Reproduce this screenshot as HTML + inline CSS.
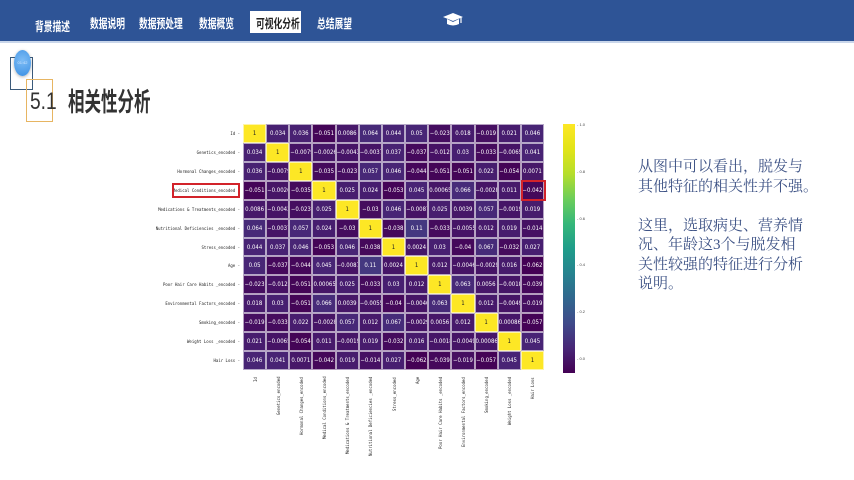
<!DOCTYPE html>
<html><head><meta charset="utf-8">
<style>
*{margin:0;padding:0;box-sizing:border-box}
body{width:854px;height:480px;overflow:hidden;background:#fff;position:relative;font-family:"Liberation Sans","Noto Sans CJK SC",sans-serif}
.hdr{position:absolute;left:0;top:0;width:854px;height:43px;background:#2e5496;border-bottom:2px solid #c9d6ea}
.nav{position:absolute;top:13px;color:#fff;font-size:12.5px;white-space:nowrap;transform:scaleX(0.7);transform-origin:0 0;font-weight:bold}
.act{position:absolute;left:250px;top:11px;width:51px;height:22px;background:#fff}
.t{position:absolute;white-space:nowrap}
#hm{position:absolute;left:243px;top:124px;width:301px;height:246px;background:#fff}
.c{position:absolute;color:#fff;font-size:6px;text-align:center;font-family:"DejaVu Sans Condensed","DejaVu Sans",sans-serif;border:0.5px solid rgba(255,255,255,.6);white-space:nowrap;overflow:hidden}
.rl{position:absolute;right:614px;font-size:4px;color:#222;white-space:nowrap;text-align:right;font-family:"DejaVu Sans Mono",monospace}
.cl{position:absolute;font-size:4px;color:#222;white-space:nowrap;transform-origin:0 0;transform:rotate(-90deg);font-family:"DejaVu Sans Mono",monospace}
.rt{font-family:"Liberation Serif","Noto Serif CJK SC",serif;font-size:15px;line-height:19.5px;color:#3d5285}
</style></head><body>
<div class="hdr"></div>
<div class="nav" style="left:35px;top:16px">背景描述</div>
<div class="nav" style="left:90px">数据说明</div>
<div class="nav" style="left:139px">数据预处理</div>
<div class="nav" style="left:199px">数据概览</div>
<div class="act"></div>
<div class="nav" style="left:256px;color:#222">可视化分析</div>
<div class="nav" style="left:317px">总结展望</div>
<svg style="position:absolute;left:443px;top:12px" width="20" height="16" viewBox="0 0 20 16"><polygon points="10,1 20,5 10,9 0,5" fill="#fff"/><path d="M4 7 V12 Q10 15 16 12 V7 L10 10 Z" fill="#fff"/><line x1="18" y1="5" x2="18" y2="11" stroke="#fff" stroke-width="1.2"/></svg>

<div style="position:absolute;left:10px;top:57px;width:23px;height:33px;border:1.5px solid #3b5a7a"></div>
<div style="position:absolute;left:14px;top:50px;width:17px;height:26px;border-radius:50%;background:radial-gradient(circle at 50% 40%,#7dbcf5,#3a8fe3);box-shadow:0 1px 3px rgba(0,0,0,.3);color:#cfe6ff;font-size:4px;text-align:center;line-height:26px">01:42</div>
<div style="position:absolute;left:26px;top:79px;width:27px;height:43px;border:1.5px solid #e7b562"></div>
<div class="t" style="left:30px;top:88px;font-size:24px;color:#333;transform:scaleX(0.8);transform-origin:0 0">5.1</div>
<div class="t" style="left:68px;top:81px;font-size:22px;color:#333;font-weight:bold;transform:scale(0.75,1.2);transform-origin:0 0">相关性分析</div>

<div id="hm"></div>
<div id="lbl"></div>
<div style="position:absolute;left:172px;top:183px;width:68px;height:15px;border:2px solid #d2232a"></div>
<div style="position:absolute;left:521px;top:180px;width:25px;height:21px;border:2.5px solid #d2232a"></div>

<div style="position:absolute;left:563px;top:124px;width:12px;height:249px;background:linear-gradient(to top,#440154 0%,#482777 10%,#3f4a8a 20%,#31678e 30%,#26838f 40%,#1f9d8a 50%,#35b779 60%,#6cce5a 70%,#b6de2b 80%,#e2e418 90%,#fde725 100%)"></div>
<div id="cb"></div>

<div class="t rt" style="left:638px;top:158px">从图中可以看出，脱发与<br>其他特征的相关性并不强。<br><br>这里，选取病史、营养情<br>况、年龄这3个与脱发相<br>关性较强的特征进行分析<br>说明。</div>

<script>
var L=["Id","Genetics_encoded","Hormonal Changes_encoded","Medical Conditions_encoded","Medications & Treatments_encoded","Nutritional Deficiencies _encoded","Stress_encoded","Age","Poor Hair Care Habits _encoded","Environmental Factors_encoded","Smoking_encoded","Weight Loss _encoded","Hair Loss"];
var M=[
["1","0.034","0.036","-0.051","0.0086","0.064","0.044","0.05","-0.023","0.018","-0.019","0.021","0.046"],
["0.034","1","-0.0079","-0.0026","-0.0043","-0.0037","0.037","-0.037","-0.012","0.03","-0.033","-0.0065","0.041"],
["0.036","-0.0079","1","-0.035","-0.023","0.057","0.046","-0.044","-0.051","-0.051","0.022","-0.054","0.0071"],
["-0.051","-0.0026","-0.035","1","0.025","0.024","-0.053","0.045","0.00065","0.066","-0.0028","0.011","-0.042"],
["0.0086","-0.0043","-0.023","0.025","1","-0.03","0.046","-0.0087","0.025","0.0039","0.057","-0.0019","0.019"],
["0.064","-0.0037","0.057","0.024","-0.03","1","-0.038","0.11","-0.033","-0.0055","0.012","0.019","-0.014"],
["0.044","0.037","0.046","-0.053","0.046","-0.038","1","0.0024","0.03","-0.04","0.067","-0.032","0.027"],
["0.05","-0.037","-0.044","0.045","-0.0087","0.11","0.0024","1","0.012","-0.0046","-0.0029","0.016","-0.062"],
["-0.023","-0.012","-0.051","0.00065","0.025","-0.033","0.03","0.012","1","0.063","0.0056","-0.0018","-0.039"],
["0.018","0.03","-0.051","0.066","0.0039","-0.0055","-0.04","-0.0046","0.063","1","0.012","-0.0049","-0.019"],
["-0.019","-0.033","0.022","-0.0028","0.057","0.012","0.067","-0.0029","0.0056","0.012","1","0.00086","-0.057"],
["0.021","-0.0065","-0.054","0.011","-0.0019","0.019","-0.032","0.016","-0.0018","-0.0049","0.00086","1","0.045"],
["0.046","0.041","0.0071","-0.042","0.019","-0.014","0.027","-0.062","-0.039","-0.019","-0.057","0.045","1"]];
var V=[[68,1,84],[72,36,117],[65,68,135],[53,95,141],[42,120,142],[33,145,140],[34,168,132],[68,191,112],[122,209,81],[189,223,38],[253,231,37]];
function col(v){var t=(v+0.062)/1.062;t=Math.max(0,Math.min(1,t))*10;var i=Math.min(9,Math.floor(t)),f=t-i;var a=V[i],b=V[i+1];return "rgb("+[0,1,2].map(function(k){return Math.round(a[k]+(b[k]-a[k])*f)}).join(",")+")";}
var cw=301/13,ch=246/13,h="",l="";
for(var r=0;r<13;r++)for(var c=0;c<13;c++){var s=M[r][c],v=parseFloat(s);
h+='<div class="c" style="left:'+(c*cw)+'px;top:'+(r*ch)+'px;width:'+cw+'px;height:'+ch+'px;line-height:'+ch+'px;background:'+col(v)+';color:'+(v>0.5?'#222':'#fff')+'">'+s.replace("-","\u2212")+'</div>';}
document.getElementById("hm").innerHTML=h;
for(var i=0;i<13;i++){l+='<div class="rl" style="top:'+(124+i*ch+ch/2-2.5)+'px">'+L[i]+' -</div>';
l+='<div class="cl" style="left:'+(243+i*cw+cw/2-2)+'px;top:'+(377+L[i].length*2.4)+'px">'+L[i]+'</div>';}
document.getElementById("lbl").innerHTML=l;
var cb="";["1.0","0.8","0.6","0.4","0.2","0.0"].forEach(function(s,i){cb+='<div class="t" style="left:577px;top:'+(122+i*46.8)+'px;font-size:4px;color:#444">- '+s+'</div>'});
document.getElementById("cb").innerHTML=cb;
</script>
</body></html>
